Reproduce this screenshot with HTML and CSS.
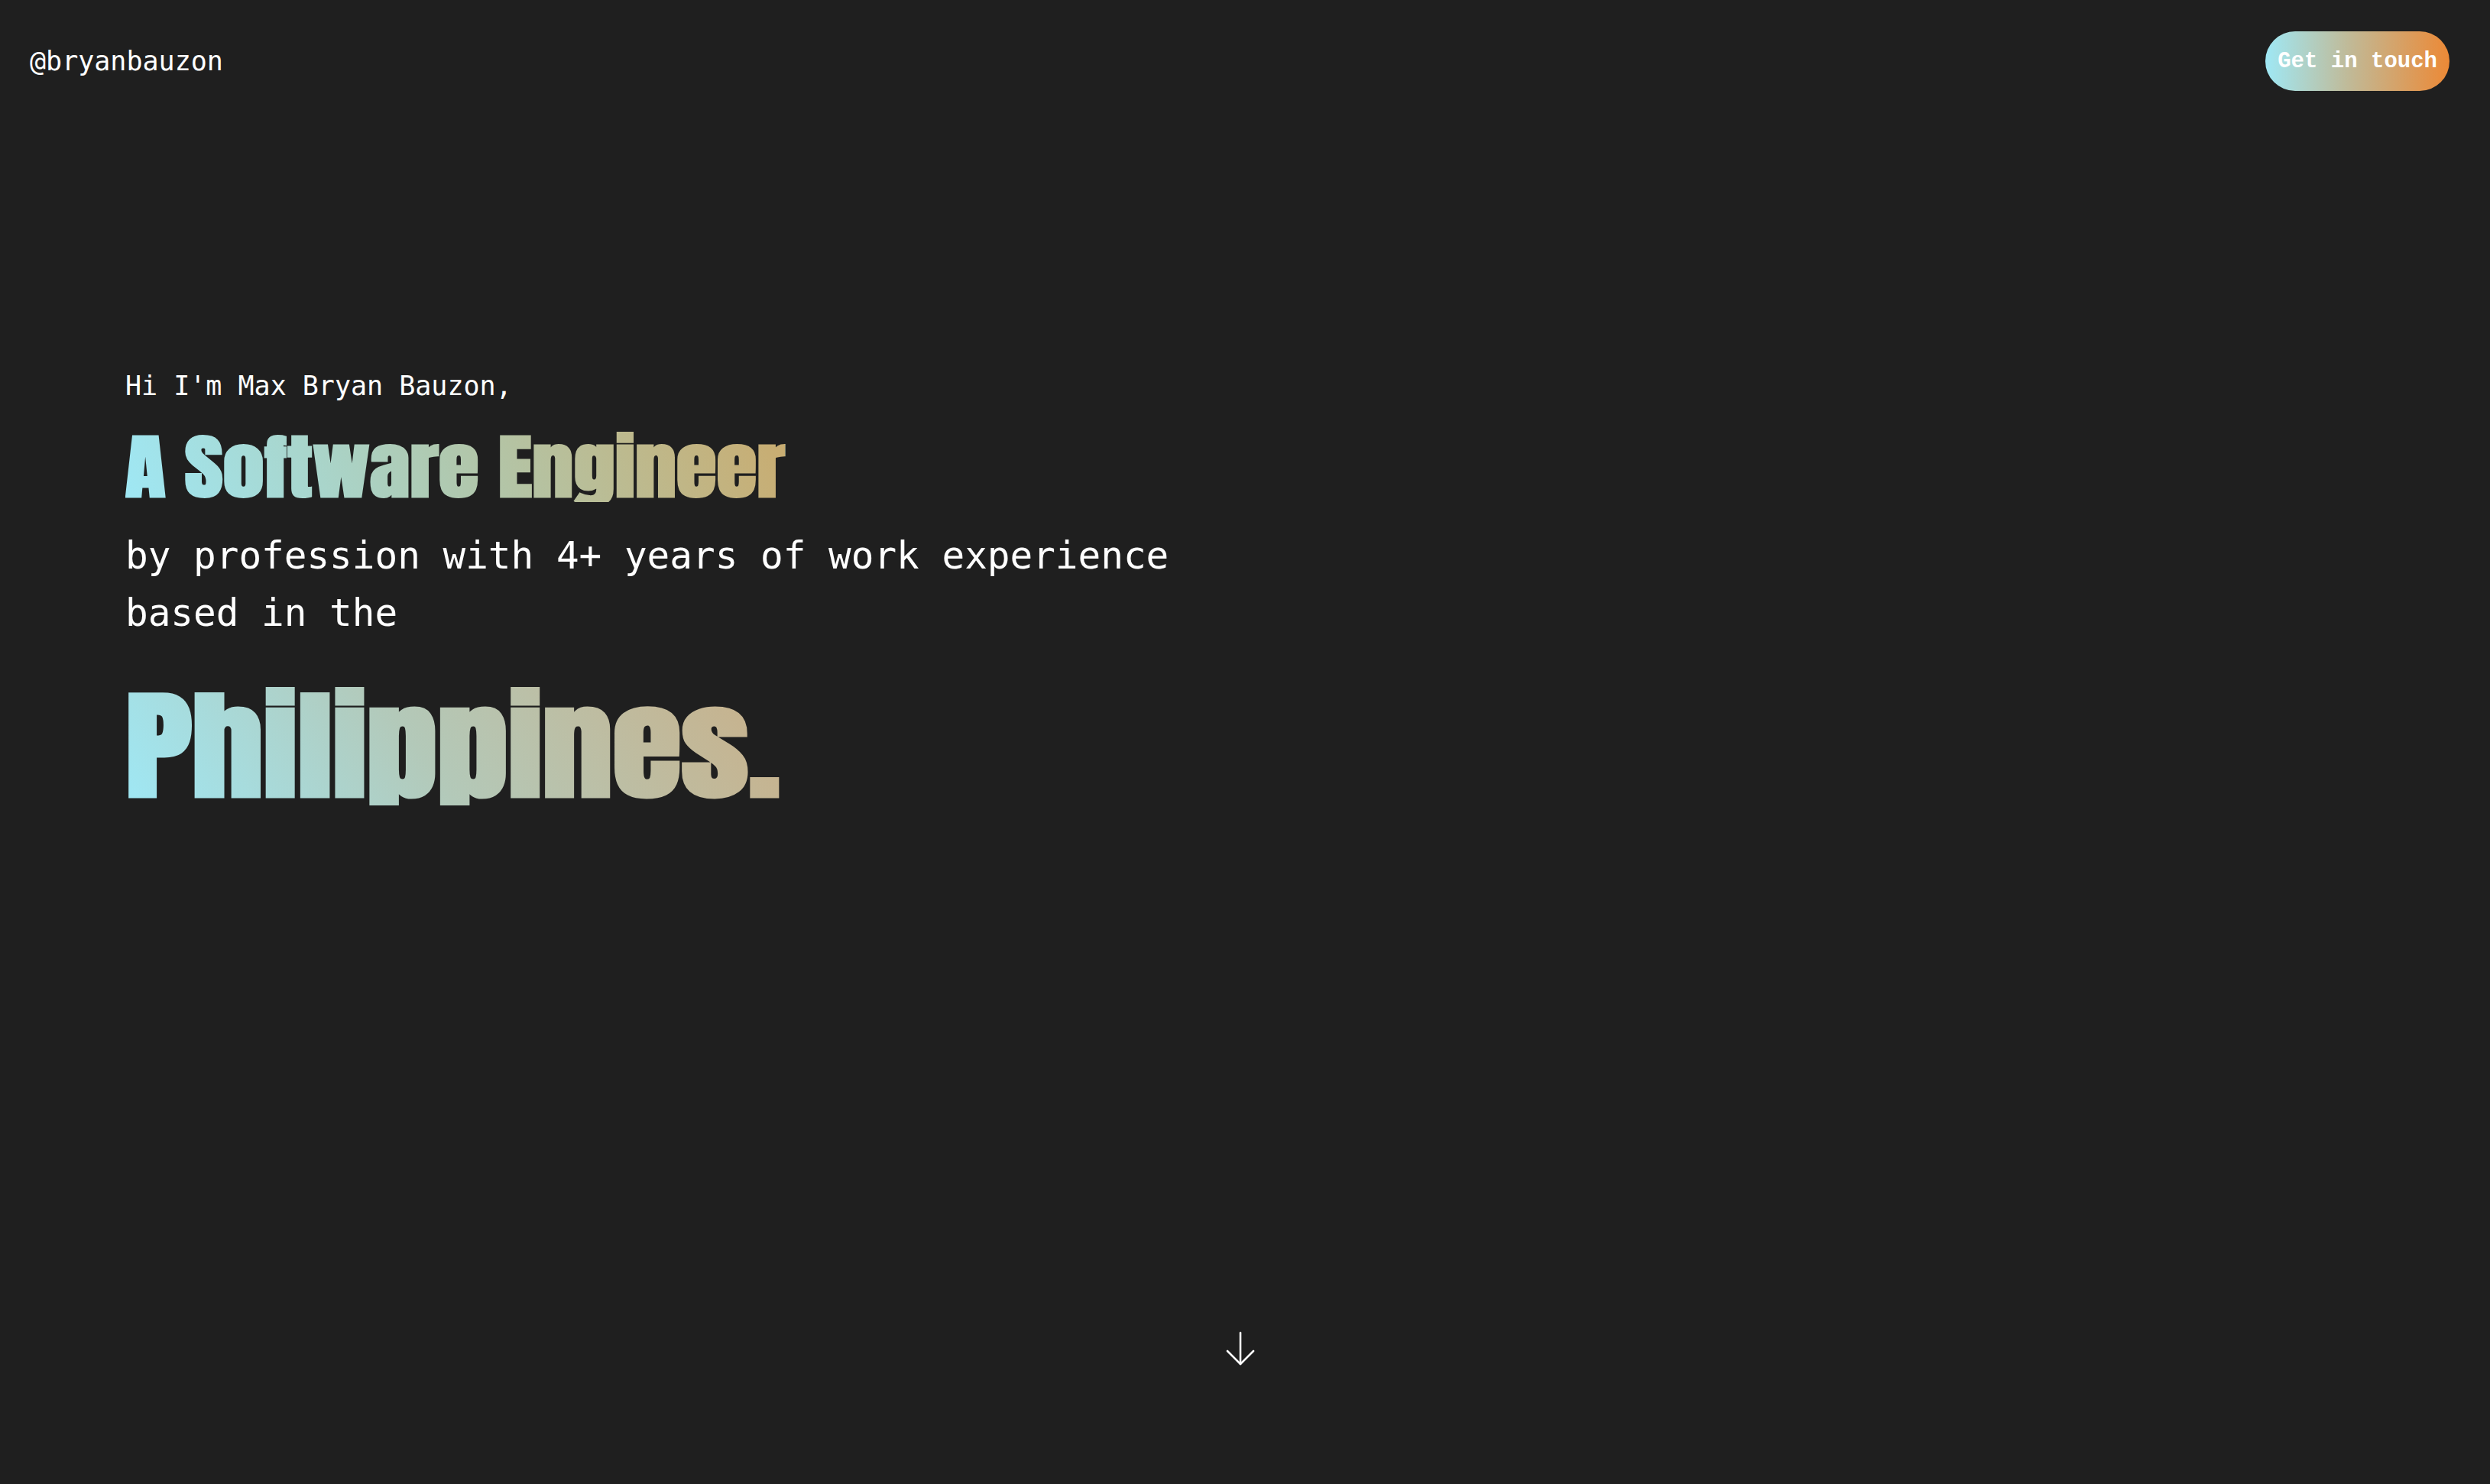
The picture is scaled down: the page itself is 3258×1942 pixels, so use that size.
FILE: index.html
```html
<!DOCTYPE html>
<html lang="en">
<head>
<meta charset="utf-8">
<title>Max Bryan Bauzon</title>
<link rel="stylesheet" href="styles.css">
</head>
<body>
  <header class="topbar">
    <a class="handle" href="#">@bryanbauzon</a>
    <a class="cta" href="#">Get in touch</a>
  </header>
  <main class="hero">
    <p class="greeting">Hi I'm Max Bryan Bauzon,</p>
    <h1 class="role">A Software Engineer</h1>
    <p class="summary">by profession with 4+ years of work experience<br>based in the</p>
    <h2 class="place">Philippines.</h2>
  </main>
  <div class="scroll-hint">
    <svg class="arrow" width="38" height="46" viewBox="0 0 38 46" fill="none" stroke="#ffffff" stroke-width="2.6" stroke-linecap="round" stroke-linejoin="round">
      <line x1="19" y1="2" x2="19" y2="43"/>
      <polyline points="2,26 19,43 36,26"/>
    </svg>
  </div>
</body>
</html>
```

FILE: styles.css
```css
html, body {
  margin: 0;
  padding: 0;
}
body {
  background: #1f1f1f;
  color: #ffffff;
  font-family: "DejaVu Sans Mono", "Liberation Mono", monospace;
  height: 100vh;
  display: flex;
  flex-direction: column;
  overflow: hidden;
}
a {
  color: inherit;
  text-decoration: none;
}
.topbar {
  display: flex;
  align-items: center;
  justify-content: space-between;
  padding: 41px 53px 0 39px;
}
.handle {
  font-size: 35px;
  line-height: 40px;
}
.cta {
  display: flex;
  align-items: center;
  justify-content: center;
  height: 78px;
  padding: 0 16px;
  border-radius: 39px;
  font-family: "Liberation Mono", "Courier New", monospace;
  font-weight: bold;
  font-size: 29px;
  color: #ffffff;
  background: linear-gradient(90deg, #9fe8f5 0%, #c0ba98 45%, #ec8936 100%);
}
.hero {
  flex: 1;
  padding: 360px 0 0 164px;
}
.greeting {
  margin: 0;
  font-size: 35px;
  line-height: 52px;
}
.role, .place {
  margin: 0;
  font-family: Impact, Anton, "Liberation Sans Narrow", "DejaVu Sans Condensed", sans-serif;
  font-weight: bold;
  line-height: 1;
  display: block;
  width: max-content;
  transform-origin: left center;
  -webkit-background-clip: text;
  background-clip: text;
  -webkit-text-fill-color: transparent;
  color: transparent;
}
.role {
  margin-top: 34px;
  font-size: 92px;
  transform: scaleX(1.175);
  background-image: linear-gradient(70deg, #9fe8f5 0%, #b0c8ae 50%, #c9ac70 100%);
}
.summary {
  margin: 33px 0 0;
  font-size: 49.3px;
  line-height: 75px;
}
.place {
  margin-top: 59px;
  font-size: 155px;
  transform: scaleX(1.19);
  background-image: linear-gradient(60deg, #9fe8f5 0%, #b3c9b9 45%, #c9b089 100%);
}
.scroll-hint {
  display: flex;
  justify-content: center;
  padding: 0 12px 154px 0;
}
.arrow {
  display: block;
}
```
